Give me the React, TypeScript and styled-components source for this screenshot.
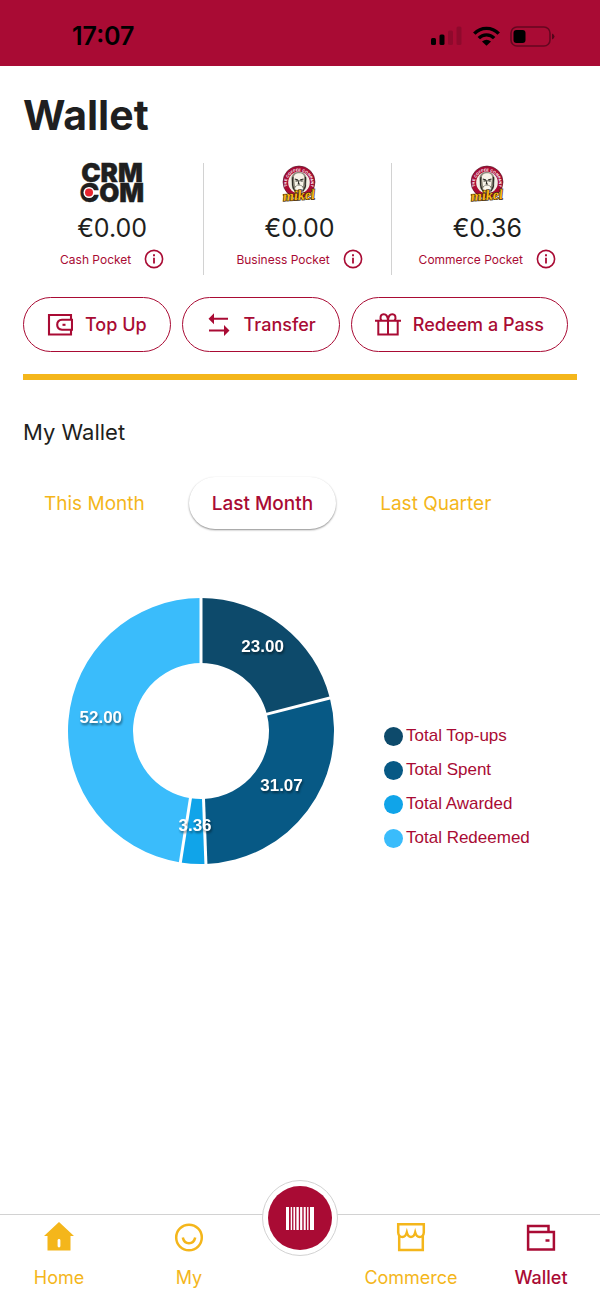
import React, { useState } from "react";
import styled, { createGlobalStyle } from "styled-components";

const color = {
  brand: "#a90b34",
  accent: "#f4b61b",
  ink: "#1f1f20",
  line: "#d2d2d2",
};

const GlobalStyle = createGlobalStyle`
  * { box-sizing: border-box; }
  body {
    margin: 0;
    background: #fff;
    color: ${color.ink};
    font-family: Inter, "Liberation Sans", sans-serif;
  }
  button { font-family: inherit; cursor: pointer; }
`;

const Page = styled.div`
  display: flex;
  flex-direction: column;
  min-height: 100vh;
`;

const StatusBar = styled.header`
  display: flex;
  align-items: center;
  justify-content: space-between;
  height: 66px;
  padding: 6px 45px 0 72px;
  background: ${color.brand};
  color: #000;
`;

const Clock = styled.time`
  font-size: 25px;
  font-weight: 600;
  line-height: 32px;
`;

const StatusIcons = styled.div`
  display: flex;
  align-items: center;
  gap: 10px;
`;

const Main = styled.main`
  flex: 1;
  padding: 25px 23px 40px;
`;

const Title = styled.h1`
  margin: 0;
  font-size: 41px;
  font-weight: 700;
  line-height: 48px;
`;

const Pockets = styled.section`
  display: grid;
  grid-template-columns: repeat(3, 1fr);
  margin: 24px -2px 0 -6px;
`;

const PocketCell = styled.article`
  display: flex;
  flex-direction: column;
  align-items: center;
  height: 112px;
  padding-left: 4px;
  border-right: 1px solid ${color.line};
  &:last-child { border-right: 0; }
`;

const Amount = styled.p`
  margin: 10px 0 6px;
  font-size: 25px;
  line-height: 30px;
`;

const PocketLabel = styled.div`
  display: flex;
  align-items: center;
  gap: 13px;
  color: ${color.brand};
  font-size: 12px;
  line-height: 20px;
  white-space: nowrap;
`;

const InfoButton = styled.button`
  display: flex;
  margin: 0 0 2px;
  padding: 0;
  border: 0;
  background: none;
  color: inherit;
`;

const Actions = styled.div`
  display: flex;
  flex-wrap: wrap;
  gap: 11px;
  margin-top: 22px;
`;

const ActionButton = styled.button`
  display: flex;
  align-items: center;
  gap: 12px;
  height: 55px;
  padding: 0 23px;
  border: 1px solid ${color.brand};
  border-radius: 28px;
  background: #fff;
  color: ${color.brand};
  font-size: 18px;
  font-weight: 500;
  white-space: nowrap;
`;

const Divider = styled.hr`
  height: 6px;
  margin: 22px 0 0;
  border: 0;
  background: ${color.accent};
`;

const SectionTitle = styled.h2`
  margin: 38px 0 0;
  font-size: 22px;
  font-weight: 400;
  line-height: 28px;
`;

const Tabs = styled.div`
  display: flex;
  gap: 21px;
  margin-top: 31px;
`;

const Tab = styled.button<{ $active: boolean }>`
  height: 52px;
  padding: 0 23px;
  border: 0;
  border-radius: 26px;
  background: #fff;
  color: ${(p) => (p.$active ? color.brand : color.accent)};
  box-shadow: ${(p) => (p.$active ? "0 1px 2px rgba(0, 0, 0, 0.45)" : "none")};
  font-size: 19px;
  font-weight: ${(p) => (p.$active ? 500 : 400)};
  white-space: nowrap;
  &:first-child { padding-left: 21px; }
`;

const ChartRow = styled.section`
  display: flex;
  align-items: flex-end;
  gap: 49px;
  margin-top: 68px;
  padding-left: 44px;
`;

const Donut = styled.svg`
  flex: none;
`;

const SliceLabel = styled.text`
  fill: #fff;
  font-family: "Liberation Sans", sans-serif;
  font-size: 17px;
  font-weight: 700;
  text-anchor: middle;
  filter: drop-shadow(1px 2px 1px rgba(0, 0, 0, 0.45));
`;

const Legend = styled.ul`
  margin: 0;
  padding: 0 0 10px;
  list-style: none;
`;

const LegendItem = styled.li`
  display: flex;
  align-items: center;
  gap: 3px;
  height: 34px;
  color: ${color.brand};
  font-family: "Liberation Sans", sans-serif;
  font-size: 17px;
  white-space: nowrap;
`;

const Dot = styled.span<{ $fill: string }>`
  width: 19px;
  height: 19px;
  border-radius: 50%;
  background: ${(p) => p.$fill};
`;

const NavBar = styled.nav`
  display: grid;
  grid-template-columns: 118fr 142fr 80fr 142fr 118fr;
  justify-items: center;
  height: 84px;
  border-top: 1px solid ${color.line};
  background: #fff;
`;

const NavItem = styled.a<{ $active?: boolean }>`
  display: flex;
  flex-direction: column;
  align-items: center;
  gap: 13px;
  padding-top: 7px;
  color: ${(p) => (p.$active ? color.brand : color.accent)};
  font-size: 18px;
  font-weight: ${(p) => (p.$active ? 500 : 400)};
  line-height: 26px;
  text-decoration: none;
`;

const ScanButton = styled.button`
  display: flex;
  align-items: center;
  justify-content: center;
  width: 76px;
  height: 76px;
  margin-top: -35px;
  padding: 0;
  border: 1px solid ${color.line};
  border-radius: 50%;
  background: #fff;
`;

const ScanDisc = styled.span`
  display: flex;
  align-items: center;
  justify-content: center;
  width: 64px;
  height: 64px;
  border-radius: 50%;
  background: ${color.brand};
`;

const LogoSvg = styled.svg`
  flex: none;
  overflow: visible;
`;

const SignalIcon = () => (
  <svg width="32" height="20" viewBox="0 0 32 20" aria-hidden="true">
    <rect x="0" y="12" width="5" height="7" rx="1.5" />
    <rect x="8.5" y="8.5" width="5" height="10.5" rx="1.5" />
    <rect x="17" y="4.5" width="5" height="14.5" rx="1.5" opacity=".15" />
    <rect x="25.5" y="0.5" width="5" height="18.5" rx="1.5" opacity=".15" />
  </svg>
);

const WifiIcon = () => (
  <svg width="27" height="20" viewBox="0 0 27 20" fill="none" stroke="#000" strokeWidth="3.4" aria-hidden="true">
    <path d="M1.3 7.6 C8 .6 19 .6 25.7 7.6" />
    <path d="M5.8 12.2 C10 7.8 17 7.8 21.2 12.2" />
    <path d="M9 15.6 Q13.500 11.800 18 15.600 L13.500 19.800 Z" fill="#000" stroke="none" />
  </svg>
);

const BatteryIcon = () => (
  <svg width="45" height="21" viewBox="0 0 45 21" aria-hidden="true">
    <rect x="1" y="1" width="39" height="19" rx="6" fill="none" stroke="#000" strokeOpacity=".4" strokeWidth="1.6" />
    <rect x="3.500" y="4" width="12" height="13" rx="3" />
    <path d="M42 7.500 Q44.500 8.500 44.500 10.500 Q44.500 12.500 42 13.500 Z" opacity=".5" />
  </svg>
);

const CrmLogo = () => (
  <LogoSvg width="68" height="40" viewBox="0 0 68 40" role="img" aria-label="CRM.COM">
    <g
      fill={color.ink}
      stroke={color.ink}
      strokeWidth=".4"
      fontFamily="Inter, sans-serif"
      fontWeight="900"
      fontSize="26"
      textAnchor="middle"
    >
      <text x="34" y="19">CRM</text>
      <text x="34" y="39">COM</text>
    </g>
    <circle cx="11" cy="29.500" r="5.500" fill="#fff" />
    <circle cx="11" cy="29.500" r="4" fill="#e8252e" />
  </LogoSvg>
);

const MikelLogo = ({ id }: { id: string }) => (
  <LogoSvg width="36" height="40" viewBox="0 0 36 40" role="img" aria-label="Mikel, The Coffee Company">
    <circle cx="18" cy="19" r="16" fill={color.brand} stroke="#4a1422" strokeWidth=".6" />
    <circle cx="18" cy="19.500" r="10.800" fill="#f2efe6" />
    <defs>
      <path id={id} d="M6.500 24.500 A12.200 12.200 0 1 1 29.500 24.500" />
    </defs>
    <text fill="#fff" fontFamily="Liberation Sans, sans-serif" fontWeight="700" fontSize="3.800" textAnchor="middle">
      <textPath href={`#${id}`} startOffset="50%">THE COFFEE COMPANY</textPath>
    </text>
    <path d="M10.500 18 C9.500 11 14 8.800 18 9 C23 8.800 26.500 13 25.500 18 L25 25 L22 29 H14 L11 25 Z" fill="#8d897b" />
    <path d="M13 15 C12.500 11 16 10 18.500 10.200 C21.500 10.300 23.500 12 23 15 L22 23 H14 Z" fill="#f7f3e8" />
    <path
      d="M12 14 C11 17 12 19 11.500 22 C12 25 13 27 15 29 M24.500 14 C25 18 23.500 20 24.500 23 L22 28 M13.800 16 L17 17 M19 17 L22.500 16 M14.500 18 H16.800 M19.500 18 H21.800 M18 17 L17.300 21 H19 M19.500 23 L21.500 25"
      fill="none"
      stroke="#292822"
      strokeWidth="1.100"
    />
    <path d="M13.500 26 C14.500 22 17 22 18 22.600 C19 22 21.500 22 22.500 26 L18 30 Z" fill="#fbf8ef" stroke="#4b483d" strokeWidth=".5" />
    <text
      x="18"
      y="37"
      textAnchor="middle"
      fill="#fbb716"
      stroke="#3a2708"
      strokeWidth="1.300"
      paintOrder="stroke"
      fontFamily="Liberation Serif, serif"
      fontStyle="italic"
      fontWeight="700"
      fontSize="14"
      transform="rotate(-4 18 34)"
    >
      mikel
    </text>
  </LogoSvg>
);

const InfoIcon = () => (
  <svg width="20" height="20" viewBox="0 0 20 20" fill="none" stroke="currentColor" aria-hidden="true">
    <circle cx="10" cy="10" r="8.600" strokeWidth="1.600" />
    <path d="M10 8.800 V14.500" strokeWidth="1.800" />
    <path d="M10 5.300 V7.300" strokeWidth="1.900" />
  </svg>
);

const TopUpIcon = () => (
  <svg width="26" height="24" viewBox="0 0 26 24" fill="none" stroke="currentColor" strokeWidth="2.100" aria-hidden="true">
    <path d="M24 6.500 V2 H2 V21.500 H24 V17" />
    <path d="M25 6.800 H15 Q10.200 7.200 10.200 11.800 Q10.200 16.400 15 16.800 H25 Z" />
    <path d="M15.500 11.800 H18.500" />
  </svg>
);

const TransferIcon = () => (
  <svg width="26" height="24" viewBox="0 0 26 24" fill="none" stroke="currentColor" strokeWidth="2.100" aria-hidden="true">
    <path d="M6 5.800 H22 M3 17.500 H19" />
    <path d="M2.500 5.800 L8 .300 V11.300 Z M23.500 17.500 L18 12 V23 Z" fill="currentColor" stroke="none" />
  </svg>
);

const GiftIcon = () => (
  <svg width="26" height="24" viewBox="0 0 26 24" fill="none" stroke="currentColor" strokeWidth="2" aria-hidden="true">
    <path d="M0 7.700 H26 M3.300 7.700 V21.500 H22.700 V7.700 M13 7.700 V21.500" />
    <path d="M6.500 7.700 C4.500 4.700 5.500 1.200 8.800 1.200 C12 1.200 12.800 4 13 7.700 C13.200 4 14 1.200 17.200 1.200 C20.500 1.200 21.500 4.700 19.500 7.700" />
  </svg>
);

const HomeIcon = () => (
  <svg width="30" height="30" viewBox="0 0 30 30" fill="currentColor" aria-hidden="true">
    <path d="M15 0 L30 14 H26.500 V28.500 H3.500 V14 H0 Z" />
    <rect x="13.600" y="17" width="2.800" height="8.500" rx="1.400" fill="#fff" />
  </svg>
);

const SmileIcon = () => (
  <svg width="30" height="30" viewBox="0 0 30 30" fill="none" stroke="currentColor" strokeWidth="2.500" aria-hidden="true">
    <circle cx="15" cy="15.500" r="12.800" />
    <path d="M8.800 15.500 Q10 21.300 15 21.300 Q20 21.300 21.200 15.500" />
  </svg>
);

const ShopIcon = () => (
  <svg width="30" height="30" viewBox="0 0 30 30" fill="none" stroke="currentColor" strokeWidth="2.500" aria-hidden="true">
    <path d="M2.200 2.300 H27.800 V10.500 Q27.500 15 23.500 15 Q20.500 15 19.200 10.500 Q18 15 15 15 Q12 15 10.800 10.500 Q9.500 15 6.500 15 Q2.500 15 2.200 10.500 Z" />
    <path d="M3.200 14 V28 H26.800 V14" />
  </svg>
);

const WalletIcon = () => (
  <svg width="30" height="30" viewBox="0 0 30 30" fill="none" stroke="currentColor" strokeWidth="2.500" aria-hidden="true">
    <path d="M2.100 10 V4.100 H22.500 V9.500 M2.100 10 H27.900 V27.400 H2.100 Z" />
    <path d="M19.500 18.500 H23.500" />
  </svg>
);

const barcode = [
  [0, 3], [4.7, 1.4], [7.4, 1.7], [10.4, 2.4], [14.1, 2.2], [17.7, 2], [21.1, 1.4], [24, 4],
];

const BarcodeIcon = () => (
  <svg width="28" height="23" viewBox="0 0 28 23" fill="#fff" aria-hidden="true">
    {barcode.map(([x, w]) => (
      <rect key={x} x={x} y="0" width={w} height="23" />
    ))}
  </svg>
);

const slices = [
  { label: "Total Top-ups", value: 23, fill: "#0d4a6b" },
  { label: "Total Spent", value: 31.07, fill: "#075985" },
  { label: "Total Awarded", value: 3.36, fill: "#10a4e9" },
  { label: "Total Redeemed", value: 52, fill: "#3abcfb" },
];

const CENTER = 134;
const OUTER = 133;
const INNER = 68;

const point = (angle: number, radius: number) => [
  CENTER + radius * Math.sin(angle),
  CENTER - radius * Math.cos(angle),
];

const DonutChart = () => {
  const total = slices.reduce((sum, s) => sum + s.value, 0);
  let turn = 0;
  const arcs = slices.map((s) => {
    const start = turn;
    turn += (s.value / total) * Math.PI * 2;
    const large = turn - start > Math.PI ? 1 : 0;
    const d = [
      "M", ...point(start, OUTER),
      "A", OUTER, OUTER, 0, large, 1, ...point(turn, OUTER),
      "L", ...point(turn, INNER),
      "A", INNER, INNER, 0, large, 0, ...point(start, INNER),
      "Z",
    ].join(" ");
    return { ...s, d, start, middle: point((start + turn) / 2, (OUTER + INNER) / 2) };
  });
  return (
    <Donut width="268" height="268" viewBox="0 0 268 268" role="img" aria-label="Wallet totals">
      {arcs.map((a) => (
        <path key={a.label} d={a.d} fill={a.fill} />
      ))}
      {arcs.map((a) => {
        const [x1, y1] = point(a.start, INNER - 2);
        const [x2, y2] = point(a.start, OUTER + 2);
        return <line key={a.label} x1={x1} y1={y1} x2={x2} y2={y2} stroke="#fff" strokeWidth="3" />;
      })}
      {arcs.map((a) => (
        <SliceLabel key={a.label} x={a.middle[0]} y={a.middle[1]}>
          {a.value.toFixed(2)}
        </SliceLabel>
      ))}
    </Donut>
  );
};

const pockets = [
  { name: "Cash Pocket", amount: "€0.00", logo: <CrmLogo /> },
  { name: "Business Pocket", amount: "€0.00", logo: <MikelLogo id="ring-business" /> },
  { name: "Commerce Pocket", amount: "€0.36", logo: <MikelLogo id="ring-commerce" /> },
];

const periods = ["This Month", "Last Month", "Last Quarter"];

export default function App() {
  const [period, setPeriod] = useState("Last Month");
  return (
    <Page>
      <GlobalStyle />
      <StatusBar>
        <Clock>17:07</Clock>
        <StatusIcons>
          <SignalIcon />
          <WifiIcon />
          <BatteryIcon />
        </StatusIcons>
      </StatusBar>
      <Main>
        <Title>Wallet</Title>
        <Pockets>
          {pockets.map((p) => (
            <PocketCell key={p.name}>
              {p.logo}
              <Amount>{p.amount}</Amount>
              <PocketLabel>
                <span>{p.name}</span>
                <InfoButton aria-label={`About ${p.name}`}>
                  <InfoIcon />
                </InfoButton>
              </PocketLabel>
            </PocketCell>
          ))}
        </Pockets>
        <Actions>
          <ActionButton><TopUpIcon />Top Up</ActionButton>
          <ActionButton><TransferIcon />Transfer</ActionButton>
          <ActionButton><GiftIcon />Redeem a Pass</ActionButton>
        </Actions>
        <Divider />
        <SectionTitle>My Wallet</SectionTitle>
        <Tabs role="tablist">
          {periods.map((name) => (
            <Tab
              key={name}
              role="tab"
              aria-selected={name === period}
              $active={name === period}
              onClick={() => setPeriod(name)}
            >
              {name}
            </Tab>
          ))}
        </Tabs>
        <ChartRow>
          <DonutChart />
          <Legend>
            {slices.map((s) => (
              <LegendItem key={s.label}>
                <Dot $fill={s.fill} />
                {s.label}
              </LegendItem>
            ))}
          </Legend>
        </ChartRow>
      </Main>
      <NavBar>
        <NavItem href="#home"><HomeIcon />Home</NavItem>
        <NavItem href="#my"><SmileIcon />My</NavItem>
        <ScanButton aria-label="Scan">
          <ScanDisc><BarcodeIcon /></ScanDisc>
        </ScanButton>
        <NavItem href="#commerce"><ShopIcon />Commerce</NavItem>
        <NavItem href="#wallet" $active><WalletIcon />Wallet</NavItem>
      </NavBar>
    </Page>
  );
}
